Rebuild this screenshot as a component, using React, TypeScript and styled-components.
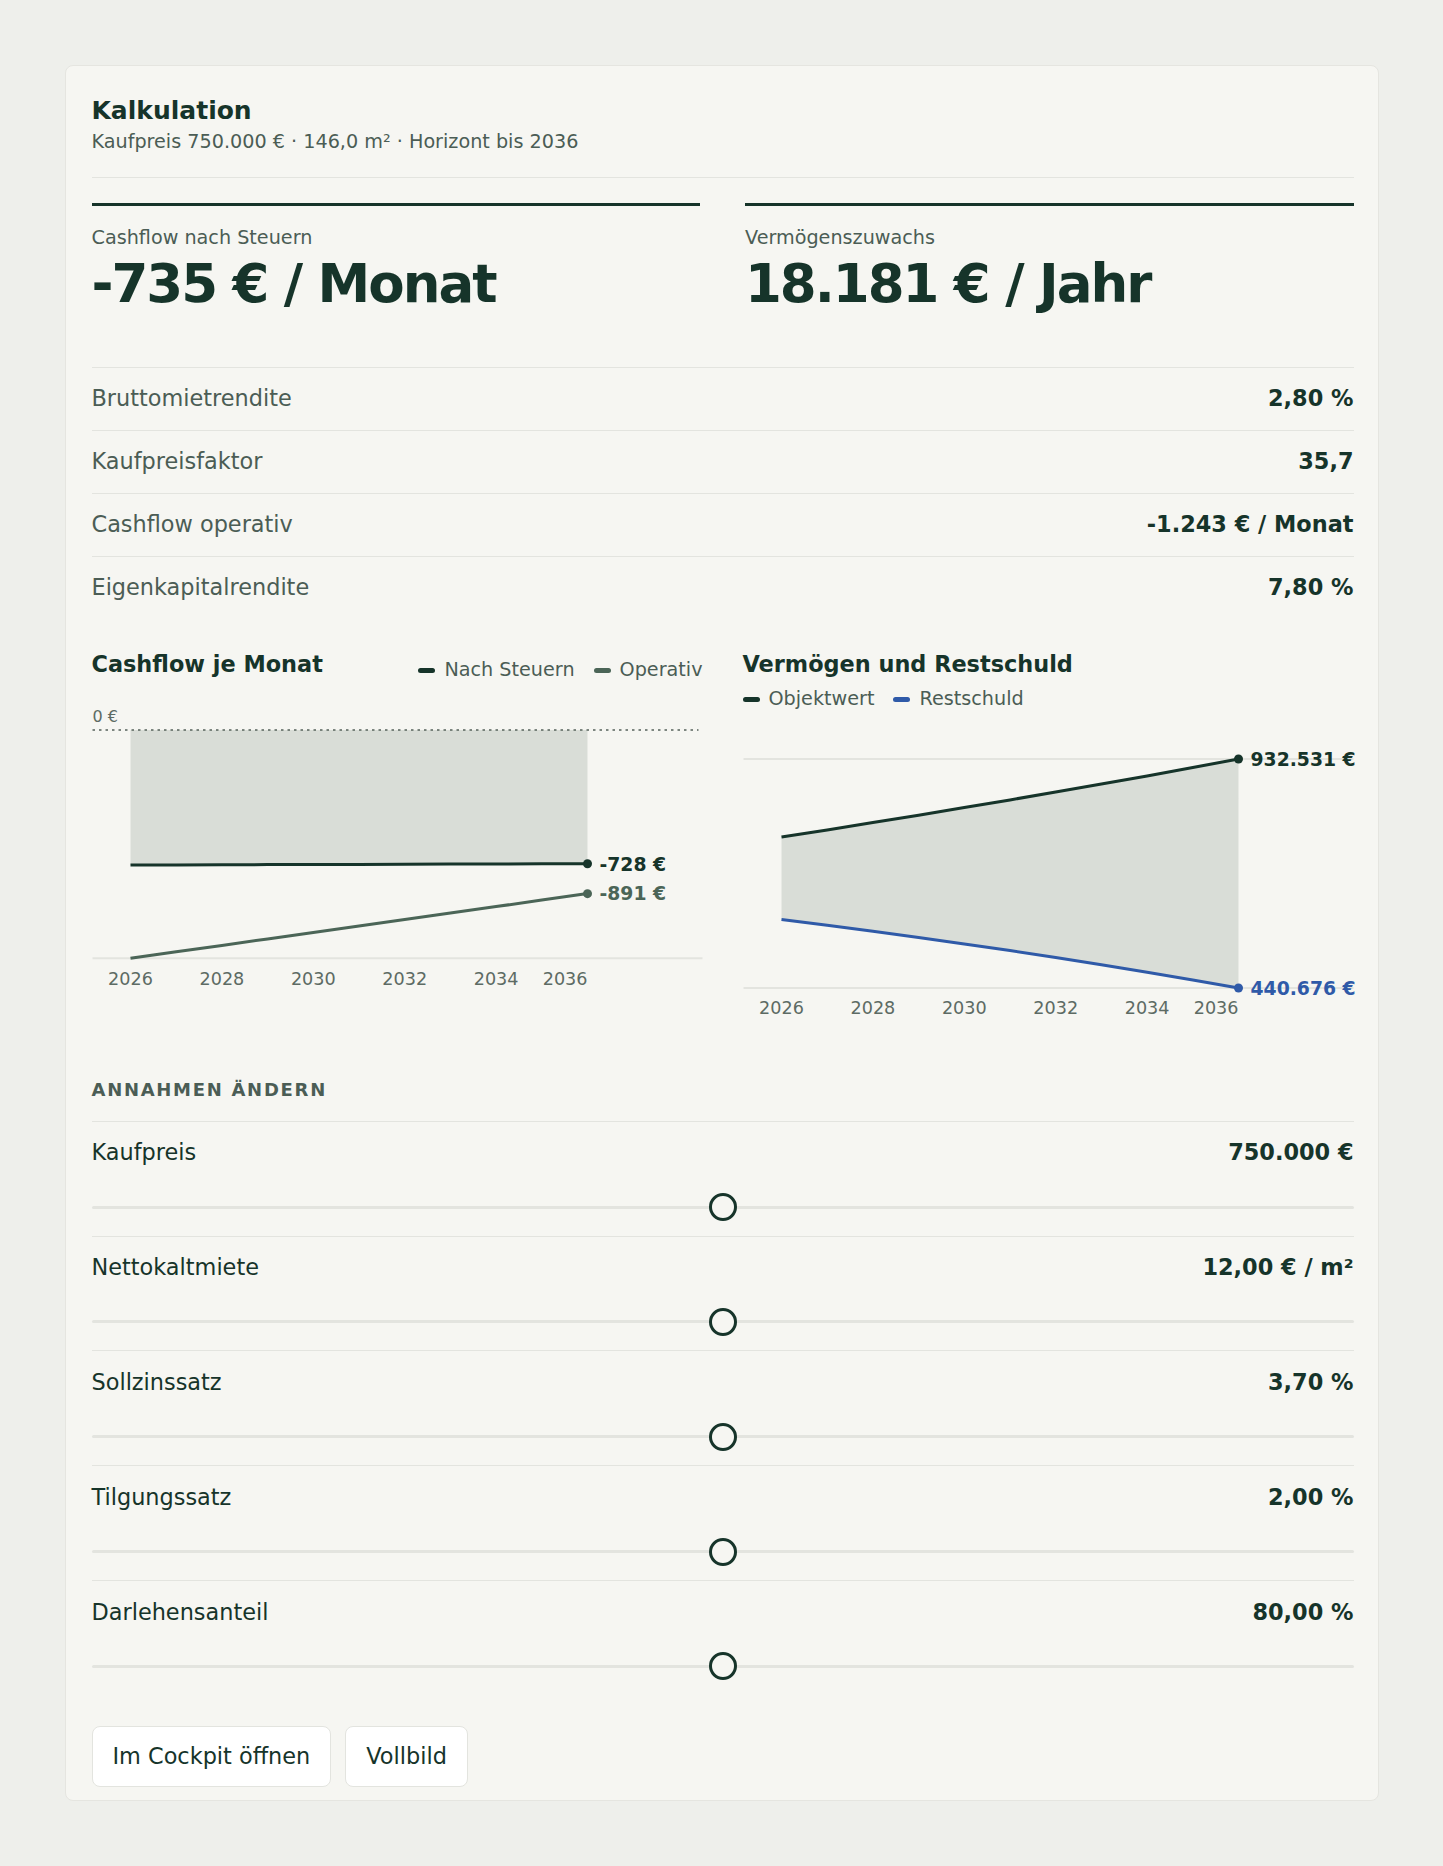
import styled, { createGlobalStyle } from 'styled-components';

const dark = '#16342a';
const muted = '#4b5d55';
const operativ = '#4b6557';
const blue = '#2f5aa8';
const areaFill = '#d9ddd7';
const line = '#e3e4df';
const axisText = '#5d6b64';

const GlobalStyle = createGlobalStyle`
  html, body {
    margin: 0;
    padding: 0;
    background: #eeefeb;
    font-family: "DejaVu Sans", "Noto Sans", sans-serif;
    color: ${dark};
  }
`;

const metrics = [
  { label: 'Bruttomietrendite', value: '2,80 %' },
  { label: 'Kaufpreisfaktor', value: '35,7' },
  { label: 'Cashflow operativ', value: '-1.243 € / Monat' },
  { label: 'Eigenkapitalrendite', value: '7,80 %' }
];

const assumptions = [
  { label: 'Kaufpreis', value: '750.000 €' },
  { label: 'Nettokaltmiete', value: '12,00 € / m²' },
  { label: 'Sollzinssatz', value: '3,70 %' },
  { label: 'Tilgungssatz', value: '2,00 %' },
  { label: 'Darlehensanteil', value: '80,00 %' }
];

// chart geometry (svg units = px)
const X0 = 38;
const X1 = 495;
const idx = Array.from({ length: 11 }, (_, i) => i);
const xAt = (i: number) => X0 + ((X1 - X0) * i) / 10;
const toPath = (pts: [number, number][]) =>
  pts.map(([x, y], i) => `${i ? 'L' : 'M'}${x.toFixed(1)},${y.toFixed(1)}`).join(' ');

const YearLabels = ({ y }: { y: number }) => (
  <>
    {[0, 2, 4, 6, 8].map((i) => (
      <text key={i} x={xAt(i)} y={y} textAnchor="middle" fontSize={17.6} fill={axisText}>
        {2026 + i}
      </text>
    ))}
    <text x={X1} y={y} textAnchor="end" fontSize={17.6} fill={axisText}>
      2036
    </text>
  </>
);

const CashflowChart = () => {
  const top = 30;
  const bottom = 258.3;
  const y = (v: number) => top + (-v * (bottom - top)) / 1243;
  const afterTax = idx.map((i) => [xAt(i), y(-735 + (7 * i) / 10)] as [number, number]);
  const operative = idx.map((i) => [xAt(i), y(-1243 + (352 * i) / 10)] as [number, number]);
  const area = `M${X0},${top} ${toPath(afterTax).replace('M', 'L')} L${X1},${top} Z`;
  const endA = afterTax[10];
  const endO = operative[10];

  return (
    <ChartSvg viewBox="0 0 610 300" height={300}>
      <text x={0} y={21.5} fontSize={16} fill={axisText}>0 €</text>
      <path d={area} fill={areaFill} />
      <line x1={0} y1={top} x2={606} y2={top} stroke="#55625b" strokeWidth={1.5} strokeDasharray="2.5 4" />
      <line x1={0} y1={bottom} x2={610} y2={bottom} stroke={line} strokeWidth={2} />
      <path d={toPath(afterTax)} fill="none" stroke={dark} strokeWidth={3} />
      <path d={toPath(operative)} fill="none" stroke={operativ} strokeWidth={3} />
      <circle cx={endA[0]} cy={endA[1]} r={4.5} fill={dark} />
      <circle cx={endO[0]} cy={endO[1]} r={4.5} fill={operativ} />
      <text x={507} y={endA[1] + 6.8} fontSize={18.8} fontWeight={700} fill={dark}>-728 €</text>
      <text x={507} y={endO[1] + 6.8} fontSize={18.8} fontWeight={700} fill={operativ}>-891 €</text>
      <YearLabels y={284.5} />
    </ChartSvg>
  );
};

const WealthChart = () => {
  const top = 30;
  const bottom = 259;
  const objekt = (i: number) => 765000 * Math.pow(1.02, i);
  const rest = (i: number) => {
    const q = Math.pow(1.037, i + 1);
    return 600000 * q - 34200 * ((q - 1) / 0.037);
  };
  const vmax = objekt(10);
  const vmin = rest(10);
  const y = (v: number) => top + ((vmax - v) / (vmax - vmin)) * (bottom - top);
  const objPts = idx.map((i) => [xAt(i), y(objekt(i))] as [number, number]);
  const restPts = idx.map((i) => [xAt(i), y(rest(i))] as [number, number]);
  const area = `${toPath(objPts)} ${toPath([...restPts].reverse()).replace('M', 'L')} Z`;

  return (
    <ChartSvg viewBox="0 0 610 300" height={300}>
      <line x1={0} y1={top} x2={610} y2={top} stroke={line} strokeWidth={2} />
      <line x1={0} y1={bottom} x2={610} y2={bottom} stroke={line} strokeWidth={2} />
      <path d={area} fill={areaFill} />
      <path d={toPath(objPts)} fill="none" stroke={dark} strokeWidth={3} />
      <path d={toPath(restPts)} fill="none" stroke={blue} strokeWidth={3} />
      <circle cx={X1} cy={top} r={4.5} fill={dark} />
      <circle cx={X1} cy={bottom} r={4.5} fill={blue} />
      <text x={507} y={top + 6.8} fontSize={18.8} fontWeight={700} fill={dark}>932.531 €</text>
      <text x={507} y={bottom + 6.8} fontSize={18.8} fontWeight={700} fill={blue}>440.676 €</text>
      <YearLabels y={285} />
    </ChartSvg>
  );
};

const App = () => {
  return (
    <Page>
      <GlobalStyle />
      <Card>
        <Header>
          <Title>Kalkulation</Title>
          <Subtitle>Kaufpreis 750.000 € · 146,0 m² · Horizont bis 2036</Subtitle>
        </Header>

        <KpiGrid>
          <Kpi>
            <KpiLabel>Cashflow nach Steuern</KpiLabel>
            <KpiValue>-735 € / Monat</KpiValue>
          </Kpi>
          <Kpi>
            <KpiLabel>Vermögenszuwachs</KpiLabel>
            <KpiValue>18.181 € / Jahr</KpiValue>
          </Kpi>
        </KpiGrid>

        <MetricList>
          {metrics.map((m) => (
            <MetricRow key={m.label}>
              <MetricLabel>{m.label}</MetricLabel>
              <MetricValue>{m.value}</MetricValue>
            </MetricRow>
          ))}
        </MetricList>

        <ChartGrid>
          <ChartPanel>
            <ChartHeader>
              <ChartTitle>Cashflow je Monat</ChartTitle>
              <Legend>
                <LegendItem><Swatch $color={dark} />Nach Steuern</LegendItem>
                <LegendItem><Swatch $color={operativ} />Operativ</LegendItem>
              </Legend>
            </ChartHeader>
            <CashflowChart />
          </ChartPanel>
          <ChartPanel>
            <ChartHeader>
              <ChartTitle>Vermögen und Restschuld</ChartTitle>
              <Legend>
                <LegendItem><Swatch $color={dark} />Objektwert</LegendItem>
                <LegendItem><Swatch $color={blue} />Restschuld</LegendItem>
              </Legend>
            </ChartHeader>
            <WealthChart />
          </ChartPanel>
        </ChartGrid>

        <SectionTitle>Annahmen ändern</SectionTitle>
        <SliderList>
          {assumptions.map((a) => (
            <SliderRow key={a.label}>
              <SliderHead>
                <SliderLabel>{a.label}</SliderLabel>
                <SliderValue>{a.value}</SliderValue>
              </SliderHead>
              <Range type="range" min={0} max={100} defaultValue={50} aria-label={a.label} />
            </SliderRow>
          ))}
        </SliderList>

        <Actions>
          <Button type="button">Im Cockpit öffnen</Button>
          <Button type="button">Vollbild</Button>
        </Actions>
      </Card>
    </Page>
  );
};

const Page = styled.div`
  padding: 65px 0;
`;

const Card = styled.main`
  box-sizing: border-box;
  width: 1314px;
  margin: 0 auto;
  padding: 30px 24px 13px 26px;
  background: #f6f6f2;
  border: 1px solid #e5e5e0;
  border-radius: 8px;
`;

const Header = styled.header`
  padding-bottom: 23px;
  border-bottom: 1px solid ${line};
`;

const Title = styled.h1`
  margin: 0;
  font-size: 25px;
  line-height: 30px;
  font-weight: 700;
  color: ${dark};
`;

const Subtitle = styled.p`
  margin: 5px 0 0;
  font-size: 19.2px;
  line-height: 22.8px;
  color: ${muted};
`;

const KpiGrid = styled.section`
  display: grid;
  grid-template-columns: 1fr 1fr;
  column-gap: 45px;
  margin-top: 25.5px;
`;

const Kpi = styled.div`
  border-top: 3px solid ${dark};
  padding-top: 21px;
`;

const KpiLabel = styled.div`
  font-size: 19.2px;
  line-height: 22.8px;
  color: ${muted};
`;

const KpiValue = styled.div`
  margin-top: 4.5px;
  font-size: 53px;
  line-height: 58.3px;
  font-weight: 700;
  letter-spacing: -0.038em;
  color: ${dark};
`;

const MetricList = styled.section`
  margin-top: 54.5px;
`;

const MetricRow = styled.div`
  display: flex;
  justify-content: space-between;
  align-items: baseline;
  border-top: 1px solid ${line};
  padding: 16.2px 0 19.4px;
  font-size: 22.4px;
  line-height: 26.4px;
`;

const MetricLabel = styled.span`
  color: ${muted};
`;

const MetricValue = styled.span`
  font-weight: 700;
  color: ${dark};
`;

const ChartGrid = styled.section`
  display: grid;
  grid-template-columns: 1fr 1fr;
  column-gap: 40px;
  margin-top: 32px;
`;

const ChartPanel = styled.div`
  min-width: 0;
`;

const ChartHeader = styled.div`
  display: flex;
  flex-wrap: wrap;
  justify-content: space-between;
  align-items: flex-start;
  row-gap: 2px;
  column-gap: 24px;
`;

const ChartTitle = styled.h2`
  margin: 0;
  font-size: 22.4px;
  line-height: 26.4px;
  font-weight: 700;
  color: ${dark};
`;

const Legend = styled.div`
  display: flex;
  gap: 19px;
  margin-top: 8px;
  font-size: 19.2px;
  line-height: 22.8px;
  color: ${muted};
`;

const LegendItem = styled.span`
  display: inline-flex;
  align-items: center;
  gap: 9px;
  white-space: nowrap;
`;

const Swatch = styled.i<{ $color: string }>`
  display: inline-block;
  width: 17px;
  height: 5px;
  border-radius: 3px;
  background: ${({ $color }) => $color};
`;

const ChartSvg = styled.svg`
  display: block;
  width: 100%;
  margin-top: 18.3px;
  overflow: visible;
  font-family: "DejaVu Sans", "Noto Sans", sans-serif;
`;

const SectionTitle = styled.h3`
  margin: 50px 0 0;
  font-size: 18px;
  line-height: 21.6px;
  font-weight: 700;
  text-transform: uppercase;
  letter-spacing: 0.095em;
  color: ${muted};
`;

const SliderList = styled.section`
  margin-top: 20.4px;
`;

const SliderRow = styled.div`
  border-top: 1px solid ${line};
  padding: 17.5px 0 14.5px;
`;

const SliderHead = styled.div`
  display: flex;
  justify-content: space-between;
  align-items: baseline;
  font-size: 22.4px;
  line-height: 26.4px;
`;

const SliderLabel = styled.span`
  color: ${dark};
`;

const SliderValue = styled.span`
  font-weight: 700;
  color: ${dark};
`;

const Range = styled.input`
  -webkit-appearance: none;
  appearance: none;
  display: block;
  width: 100%;
  height: 28px;
  margin: 27.4px 0 0;
  padding: 0;
  background: transparent;

  &::-webkit-slider-runnable-track {
    height: 3px;
    border-radius: 2px;
    background: ${line};
  }

  &::-webkit-slider-thumb {
    -webkit-appearance: none;
    box-sizing: border-box;
    width: 28px;
    height: 28px;
    margin-top: -12.5px;
    border-radius: 50%;
    border: 3px solid ${dark};
    background: #f6f6f2;
  }

  &:focus {
    outline: none;
  }
`;

const Actions = styled.div`
  display: flex;
  gap: 14px;
  margin-top: 31px;
`;

const Button = styled.button`
  padding: 16.3px 20px;
  font-family: inherit;
  font-size: 22.4px;
  line-height: 26.4px;
  color: ${dark};
  background: #ffffff;
  border: 1px solid ${line};
  border-radius: 8px;
  cursor: pointer;
`;

export default App;
